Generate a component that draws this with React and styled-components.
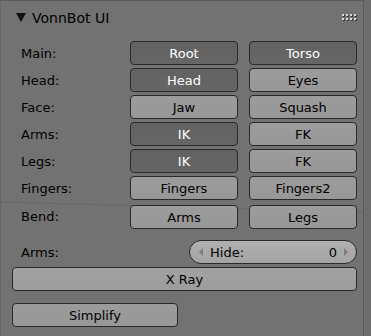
import React from 'react';
import styled, { createGlobalStyle } from 'styled-components';

const Global = createGlobalStyle`
    body {
        margin: 0;
        background: #6d6d6d;
        font-family: "DejaVu Sans", "Liberation Sans", sans-serif;
    }
`;

const Panel = styled.div`
    position: relative;
    width: 364px;
    height: 336px;
    background: #727272;
    border-top: 1px solid #5e5e5e;
    border-left: 1px solid #666;
    border-right: 1px solid #5a5a5a;
    box-sizing: border-box;
    overflow: hidden;
`;

const Backdrop = styled.svg`
    position: absolute;
    left: 0;
    top: 0;
    pointer-events: none;
`;

const Header = styled.div`
    position: relative;
    height: 33px;
    display: flex;
    align-items: center;
    padding: 0 6px 0 15px;
    color: #000;
    font-size: 14px;
`;

const Title = styled.span`
    margin-left: 6px;
    margin-top: 1px;
`;

const Grip = styled.svg`
    margin-left: auto;
    margin-top: -1px;
`;

const Body = styled.div`
    position: relative;
    padding: 7px 6px 0 11px;
    display: flex;
    flex-direction: column;
`;

const Grid = styled.div`
    display: grid;
    grid-template-columns: 107px 108px 108px;
    grid-auto-rows: 24px;
    column-gap: 11px;
    row-gap: 3px;
`;

const Label = styled.div`
    display: flex;
    align-items: center;
    padding-left: 9px;
    font-size: 13px;
    color: #000;
    margin-top: ${({ shift }) => shift || 0}px;
`;

const Button = styled.div`
    display: flex;
    align-items: center;
    justify-content: center;
    box-sizing: border-box;
    height: 24px;
    border: 1px solid #2a2a2a;
    border-radius: 4px;
    font-size: 13px;
    color: ${({ on }) => (on ? '#fff' : '#000')};
    background: ${({ on }) =>
        on
            ? 'linear-gradient(#626262, #666666)'
            : 'linear-gradient(#9c9c9c, #979797)'};
    margin-top: ${({ shift }) => shift || 0}px;
`;

const Split = styled.div`
    display: grid;
    grid-template-columns: 166px 168px;
    column-gap: 11px;
    margin-top: ${({ gap }) => gap}px;
`;

const Slider = styled.div`
    display: flex;
    align-items: center;
    box-sizing: border-box;
    height: 24px;
    padding: 0 7px 0 8px;
    border: 1px solid #2a2a2a;
    border-radius: 12px;
    background: linear-gradient(#b0b0b0, #a4a4a4);
    font-size: 13px;
    color: #000;
`;

const SliderText = styled.span`
    flex: 1;
    margin: ${({ right }) => (right ? '0 6px 0 0' : '0 0 0 6px')};
    text-align: ${({ right }) => (right ? 'right' : 'left')};
`;

const Wide = styled(Button)`
    margin-top: 3px;
    background: linear-gradient(#a2a2a2, #9c9c9c);
`;

const Arrow = ({ right }) => (
    <svg width="6" height="8" viewBox="0 0 6 8">
        <polygon points={right ? '1,0 5,4 1,8' : '5,0 1,4 5,8'} fill="#7e7e7e" />
    </svg>
);

const rows = [
    { label: 'Main:', a: 'Root', b: 'Torso', aOn: true, bOn: true },
    { label: 'Head:', a: 'Head', b: 'Eyes', aOn: true },
    { label: 'Face:', a: 'Jaw', b: 'Squash' },
    { label: 'Arms:', a: 'IK', b: 'FK', aOn: true },
    { label: 'Legs:', a: 'IK', b: 'FK', aOn: true },
    { label: 'Fingers:', a: 'Fingers', b: 'Fingers2' },
    { label: 'Bend:', a: 'Arms', b: 'Legs', shift: 2 },
];

const GripIcon = () => (
    <Grip width="15" height="7" viewBox="0 0 15 7">
        {[0, 1, 2, 3].map(c =>
            [0, 1].map(r => (
                <g key={`${c}-${r}`}>
                    <rect x={c * 4 + 1} y={r * 4 + 1} width="2" height="2" fill="#3a3a3a" />
                    <rect x={c * 4} y={r * 4} width="2" height="2" fill="#d8d8d8" />
                </g>
            ))
        )}
    </Grip>
);

const App = () => (
    <>
        <Global />
        <Panel>
            <Backdrop width="364" height="336">
                <line x1="0" y1="201" x2="364" y2="211" stroke="#686868" strokeWidth="1" />
            </Backdrop>
            <Header>
                <svg width="10" height="9" viewBox="0 0 10 9">
                    <polygon points="0,0 10,0 5,9" fill="#111" />
                </svg>
                <Title>VonnBot UI</Title>
                <GripIcon />
            </Header>
            <Body>
                <Grid>
                    {rows.map((r, i) => (
                        <React.Fragment key={i}>
                            <Label shift={r.shift}>{r.label}</Label>
                            <Button on={r.aOn} shift={r.shift}>{r.a}</Button>
                            <Button on={r.bOn} shift={r.shift}>{r.b}</Button>
                        </React.Fragment>
                    ))}
                </Grid>
                <Split gap={13}>
                    <Label>Arms:</Label>
                    <Slider>
                        <Arrow />
                        <SliderText>Hide:</SliderText>
                        <SliderText right>0</SliderText>
                        <Arrow right />
                    </Slider>
                </Split>
                <Wide>X Ray</Wide>
                <Split gap={12}>
                    <Button>Simplify</Button>
                </Split>
            </Body>
        </Panel>
    </>
);

export default App;
